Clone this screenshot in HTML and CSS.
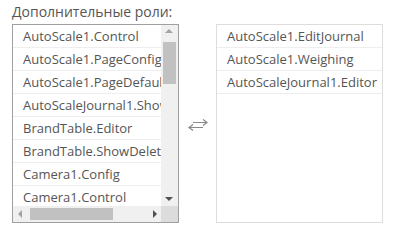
FILE: index.html
```html
<!DOCTYPE html>
<html lang="ru">
<head>
    <meta charset="UTF-8">
    <meta name="viewport" content="width=device-width, initial-scale=1.0">
    <title>Роли</title>
    <link rel="stylesheet" href="styles.css">
</head>
<body>
    <div class="roles">
        <div class="roles-title">Дополнительные роли:</div>
        <div class="roles-row">
            <div class="listbox listbox-scroll">
                <div class="list-view">
                    <ul class="list">
                        <li>AutoScale1.Control</li>
                        <li>AutoScale1.PageConfig</li>
                        <li>AutoScale1.PageDefault</li>
                        <li>AutoScaleJournal1.ShowJournal</li>
                        <li>BrandTable.Editor</li>
                        <li>BrandTable.ShowDeleted</li>
                        <li>Camera1.Config</li>
                        <li>Camera1.Control</li>
                    </ul>
                </div>
                <div class="vbar">
                    <span class="arr arr-up"></span>
                    <span class="vthumb"></span>
                    <span class="arr arr-down"></span>
                </div>
                <div class="hbar">
                    <span class="arr arr-left"></span>
                    <span class="hthumb"></span>
                    <span class="arr arr-right"></span>
                </div>
                <div class="corner"></div>
            </div>

            <div class="swap">
                <svg width="22" height="14" viewBox="0 0 22 14" fill="none" stroke="#8a8a8a" stroke-width="1.2">
                    <path d="M6 4.5H20M16 1.5L20 4.5L16 7.5"/>
                    <path d="M16 9.5H2M6 6.5L2 9.5L6 12.5"/>
                </svg>
            </div>

            <div class="listbox">
                <ul class="list">
                    <li>AutoScale1.EditJournal</li>
                    <li>AutoScale1.Weighing</li>
                    <li>AutoScaleJournal1.Editor</li>
                </ul>
            </div>
        </div>
    </div>
</body>
</html>
```

FILE: styles.css
```css
body { margin: 0; background: #fff; font-family: "Open Sans", Arial, sans-serif; color: #555; }
.roles { padding: 0 12px; }
.roles-title { font-size: 14px; line-height: 20px; padding-top: 2px; margin-bottom: 2px; color: #555; }
.roles-row { display: flex; align-items: flex-start; }

.listbox { width: 165px; height: 197px; border: 1px solid #ddd; background: #fff; overflow: hidden; }
.listbox-scroll { border-color: #a0a0a0; display: grid; grid-template-columns: 148px 17px; grid-template-rows: 181px 16px; }

.list { list-style: none; margin: 0; padding: 0; }
.list li { height: 22px; line-height: 22px; padding-left: 10px; font-size: 13px; white-space: nowrap; border-bottom: 1px solid #eee; }
.list-view { overflow: hidden; }

.vbar { background: #f0f0f0; position: relative; }
.hbar { background: #f0f0f0; position: relative; }
.corner { background: #dcdcdc; }
.vthumb { position: absolute; left: 2px; right: 2px; top: 17px; height: 42px; background: #c1c1c1; }
.hthumb { position: absolute; top: 2px; bottom: 2px; left: 17px; width: 83px; background: #c1c1c1; }

.arr { position: absolute; width: 0; height: 0; border: 4px solid transparent; }
.arr-up { left: 4px; top: 4px; border-bottom-color: #a3a3a3; border-top-width: 0; }
.arr-down { left: 4px; bottom: 5px; border-top-color: #505050; border-bottom-width: 0; }
.arr-left { top: 4px; left: 5px; border-right-color: #a3a3a3; border-left-width: 0; }
.arr-right { top: 4px; right: 4px; border-left-color: #505050; border-right-width: 0; }

.swap { width: 37px; padding-top: 94px; display: flex; justify-content: center; }
```
